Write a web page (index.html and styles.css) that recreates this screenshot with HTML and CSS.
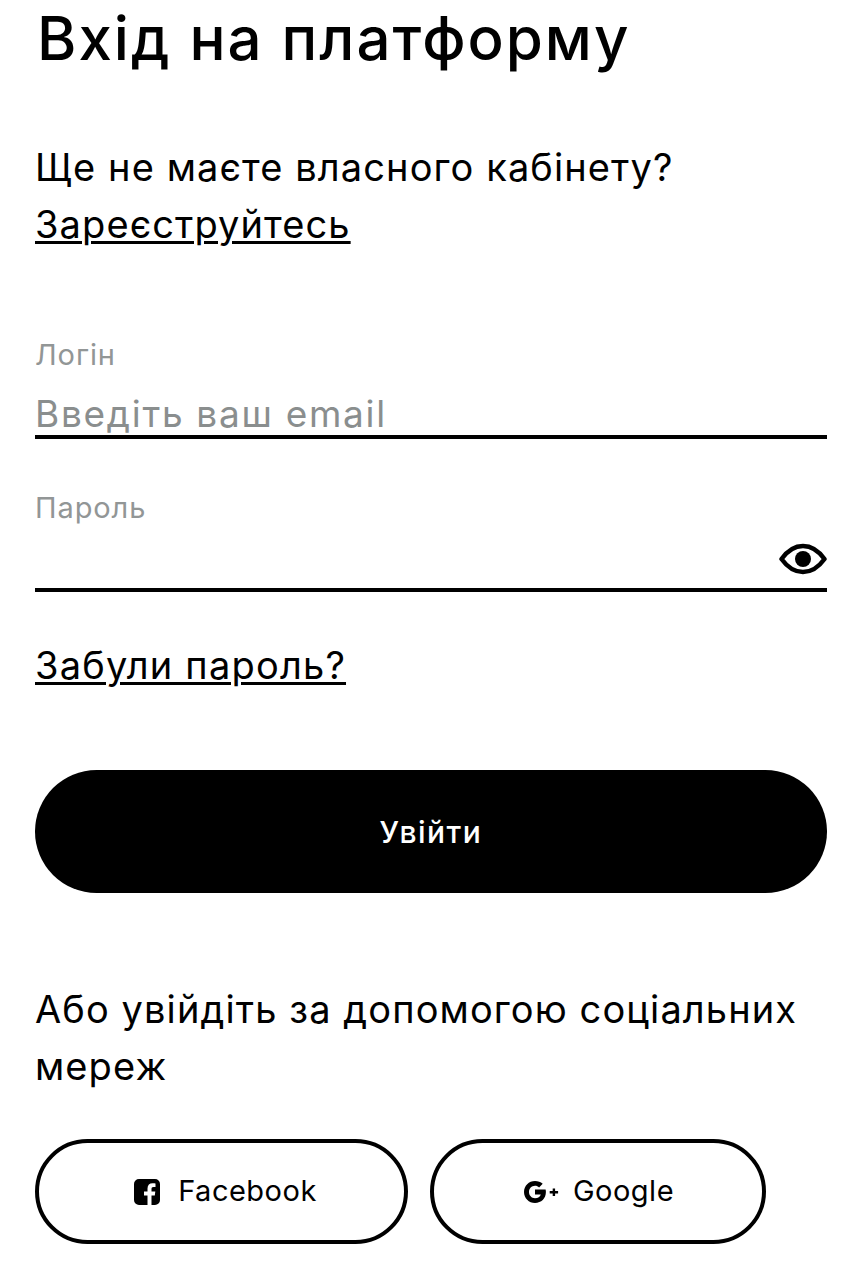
FILE: index.html
```html
<!DOCTYPE html>
<html lang="uk">
<head>
    <meta charset="UTF-8">
    <meta name="viewport" content="width=device-width, initial-scale=1.0">
    <title>Вхід на платформу</title>
    <link rel="stylesheet" href="styles.css">
</head>
<body>
    <div class="login">
        <h1 class="title">Вхід на платформу</h1>
        <p class="text register">Ще не маєте власного кабінету?<br><a href="#">Зареєструйтесь</a></p>

        <div class="field field-login">
            <label class="label">Логін</label>
            <div class="control"><span class="placeholder">Введіть ваш email</span></div>
        </div>
        <div class="field field-password">
            <label class="label">Пароль</label>
            <div class="control">
                <svg class="eye" viewBox="0 0 48 32" width="48" height="32">
                    <path d="M2.500 16C9 7 16 3 24 3s15 4 21.500 13C39 25 32 29 24 29S9 25 2.500 16z" fill="none" stroke="#000" stroke-width="4.500" stroke-linejoin="round"/>
                    <circle cx="24" cy="16" r="8" fill="#000"/>
                </svg>
            </div>
        </div>

        <a class="text forgot" href="#">Забули пароль?</a>
        <button class="submit">Увійти</button>
        <p class="text social-title">Або увійдіть за допомогою соціальних мереж</p>

        <div class="social">
            <button class="social-btn facebook">
                <svg viewBox="0 0 26 26" width="26" height="26">
                    <path d="M5 0h16a5 5 0 0 1 5 5v16a5 5 0 0 1-5 5h-3.500v-9.500h3.300l.5-4h-3.800V10c0-1.200.4-2 2-2h2V4.400c-.6-.1-1.700-.2-3-.2-3 0-5 1.800-5 5.200v3.100H10v4h3.500V26H5a5 5 0 0 1-5-5V5a5 5 0 0 1 5-5z" fill="#000"/>
                </svg>
                <span class="social-name">Facebook</span>
            </button>
            <button class="social-btn google">
                <svg viewBox="0 0 36 22" width="36" height="22">
                    <path d="M11 8.500v5h5.800c-.6 2.300-2.800 3.700-5.800 3.700-3.400 0-6-2.800-6-6.200s2.600-6.200 6-6.200c1.600 0 3 .6 4.100 1.600l3.600-3.600C16.700 1 14 0 11 0 4.900 0 0 4.900 0 11s4.900 11 11 11c6.300 0 10.900-4.400 10.900-10.900 0-.9-.1-1.800-.3-2.600H11z" fill="#000"/>
                    <path d="M28.700 7.500h2.400V10h3v2.400h-3v2.600h-2.400v-2.600h-3V10h3z" fill="#000"/>
                </svg>
                <span class="social-name">Google</span>
            </button>
        </div>
    </div>
</body>
</html>
```

FILE: styles.css
```css
body {
    margin: 0;
    background-color: #fff;
    color: #000;
    font-family: Inter, "Noto Sans", sans-serif;
}
.login {
    padding: 0 34px 0 35px;
}
.title {
    margin: 0;
    padding: 3px 0 0 2px;
    font-size: 60px;
    line-height: 70px;
    font-weight: 500;
    letter-spacing: 2px;
}
.text {
    font-size: 38px;
    line-height: 57px;
    letter-spacing: 1.1px;
    color: #000;
}
.register {
    margin: 66px 0 0;
}
.text a, .forgot {
    color: #000;
    text-decoration: underline;
    text-decoration-thickness: 3px;
    text-underline-offset: 3px;
}
.forgot {
    letter-spacing: 1.2px;
}
.field-login {
    margin-top: 85px;
}
.field-password {
    margin-top: 52px;
}
.label {
    display: block;
    font-size: 29px;
    line-height: 34px;
    letter-spacing: 0.9px;
    color: #929696;
}
.control {
    display: flex;
    justify-content: flex-end;
    align-items: center;
    height: 63px;
    border-bottom: 4px solid #000;
}
.placeholder {
    flex: 1;
    font-size: 37px;
    letter-spacing: 1.7px;
    color: #8a8e8e;
    padding-top: 20px;
}
.eye {
    margin-top: 4px;
}
.forgot {
    display: block;
    margin-top: 45px;
}
.submit {
    display: block;
    width: 100%;
    height: 123px;
    margin-top: 76px;
    border: none;
    border-radius: 62px;
    background-color: #000;
    color: #fff;
    font-family: inherit;
    font-size: 30px;
    font-weight: 500;
    letter-spacing: 1.5px;
}
.social-title {
    margin: 88px 0 0;
}
.social {
    display: flex;
    gap: 22px;
    margin-top: 44px;
}
.social-btn {
    display: flex;
    align-items: center;
    justify-content: center;
    height: 105px;
    border: 4px solid #000;
    border-radius: 53px;
    background-color: #fff;
    color: #000;
    font-family: inherit;
    font-size: 29px;
    letter-spacing: 0.5px;
    box-sizing: border-box;
}
.social-name {
    margin-top: -2px;
}
.facebook {
    width: 373px;
    gap: 18px;
    padding-left: 14px;
}
.google {
    width: 336px;
    gap: 13px;
    padding-left: 8px;
}
```
